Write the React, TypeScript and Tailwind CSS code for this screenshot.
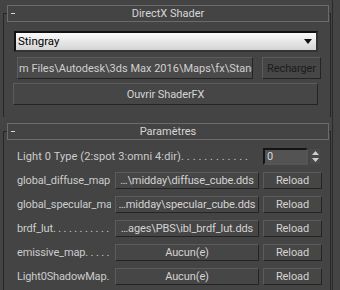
const font = "font-['Roboto','Liberation_Sans',sans-serif]"

function RolloutTitle({ label }: { label: string }) {
  return (
    <div className="relative z-10 -mt-[9px] ml-[3px] mr-[1px] flex h-[17px] items-center border border-[#6b6b6b] bg-[#444444]">
      <span className="absolute left-[3px] top-[7px] h-px w-[4px] bg-[#d8d8d8]" />
      <span className="flex-1 text-center text-[11px] leading-none text-[#d6d6d6]">{label}</span>
    </div>
  )
}

function Btn({ children, className = '' }: { children: React.ReactNode; className?: string }) {
  return (
    <div
      className={`flex items-center justify-center overflow-hidden whitespace-nowrap border border-t-[#5c5c5c] border-l-[#5c5c5c] border-b-[#242424] border-r-[#242424] bg-[#464646] text-[11px] leading-none tracking-[-0.1px] text-[#d4d4d4] ${className}`}
    >
      {children}
    </div>
  )
}

const rows = [
  { label: 'global_diffuse_map', value: '…\\midday\\diffuse_cube.dds' },
  { label: 'global_specular_map', value: '…midday\\specular_cube.dds' },
  { label: 'brdf_lut. . . . . . . . . . .', value: '…ages\\PBS\\ibl_brdf_lut.dds' },
  { label: 'emissive_map. . . . . . . .', value: 'Aucun(e)' },
  { label: 'Light0ShadowMap. . . . .', value: 'Aucun(e)' },
]

export default function App() {
  return (
    <div className={`flex h-[290px] w-[340px] overflow-hidden bg-[#444444] ${font}`}>
      <div className="w-[333px] border-r border-[#2a2a2a] pt-[13px]">
        {/* DirectX Shader */}
        <div className="ml-[3px] mr-[1px] h-[104px] border-x border-t border-[#262626]">
          <RolloutTitle label="DirectX Shader" />
          <div className="mt-[9px] ml-[10px] mr-[12px] flex h-[21px] items-center justify-between border-2 border-t-[#111] border-l-[#111] border-b-[#333] border-r-[#333] bg-gradient-to-b from-[#fbfbfb] to-[#d4d4d4] pl-[2px] pr-[4px]">
            <span className="text-[11.5px] leading-none text-black">Stingray</span>
            <svg width="8" height="6" viewBox="0 0 8 6">
              <path d="M0 0H8L4 5Z" fill="#111" />
            </svg>
          </div>
          <div className="mt-[5px] ml-[13px] flex gap-[9px]">
            <div className="flex h-[22px] w-[236px] items-center overflow-hidden whitespace-nowrap border border-t-[#5c5c5c] border-l-[#5c5c5c] border-b-[#242424] border-r-[#242424] bg-[#4a4a4a] pl-[1px] text-[11px] leading-none text-[#d0d0d0]">
              m Files\Autodesk\3ds Max 2016\Maps\fx\StandardFX
            </div>
            <Btn className="h-[22px] w-[59px] !text-[#1c1c1c]">Recharger</Btn>
          </div>
          <Btn className="mt-[4px] ml-[9px] h-[22px] w-[305px]">Ouvrir ShaderFX</Btn>
        </div>

        {/* Paramètres */}
        <div className="mt-[14px] ml-[3px] mr-[1px] h-[170px] border-x border-t border-[#262626]">
          <RolloutTitle label="Paramètres" />
          <div className="mt-[8px] ml-[13px] flex h-[17px] items-center">
            <span className="w-[232px] overflow-hidden whitespace-nowrap text-[11px] leading-none tracking-[0.1px] text-[#cccccc]">
              Light 0 Type (2:spot 3:omni 4:dir). . . . . . . . . . . . . . . . . .
            </span>
            <div className="ml-[14px] flex h-[17px] w-[45px] items-center border-2 border-t-[#141414] border-l-[#141414] border-b-[#555] border-r-[#555] bg-[#535353] pl-[2px] text-[11px] leading-none text-[#d8d8d8]">
              0
            </div>
            <div className="ml-[2px] flex h-[15px] w-[10px] flex-col items-center justify-center gap-[3px] bg-[#4a4a4a]">
              <svg width="7" height="4" viewBox="0 0 7 4">
                <path d="M0 4H7L3.5 0Z" fill="#d0d0d0" />
              </svg>
              <svg width="7" height="4" viewBox="0 0 7 4">
                <path d="M0 0H7L3.5 4Z" fill="#d0d0d0" />
              </svg>
            </div>
          </div>
          <div className="mt-[7px] flex flex-col gap-[7px]">
            {rows.map((r) => (
              <div key={r.label} className="ml-[13px] flex h-[17px] items-center">
                <span className="w-[94px] overflow-hidden whitespace-nowrap text-[11px] leading-none tracking-[-0.15px] text-[#cccccc]">
                  {r.label}
                </span>
                <Btn className="ml-[4px] h-[17px] w-[144px]">{r.value}</Btn>
                <Btn className="ml-[4px] h-[17px] w-[59px]">Reload</Btn>
              </div>
            ))}
          </div>
        </div>
      </div>
    </div>
  )
}
